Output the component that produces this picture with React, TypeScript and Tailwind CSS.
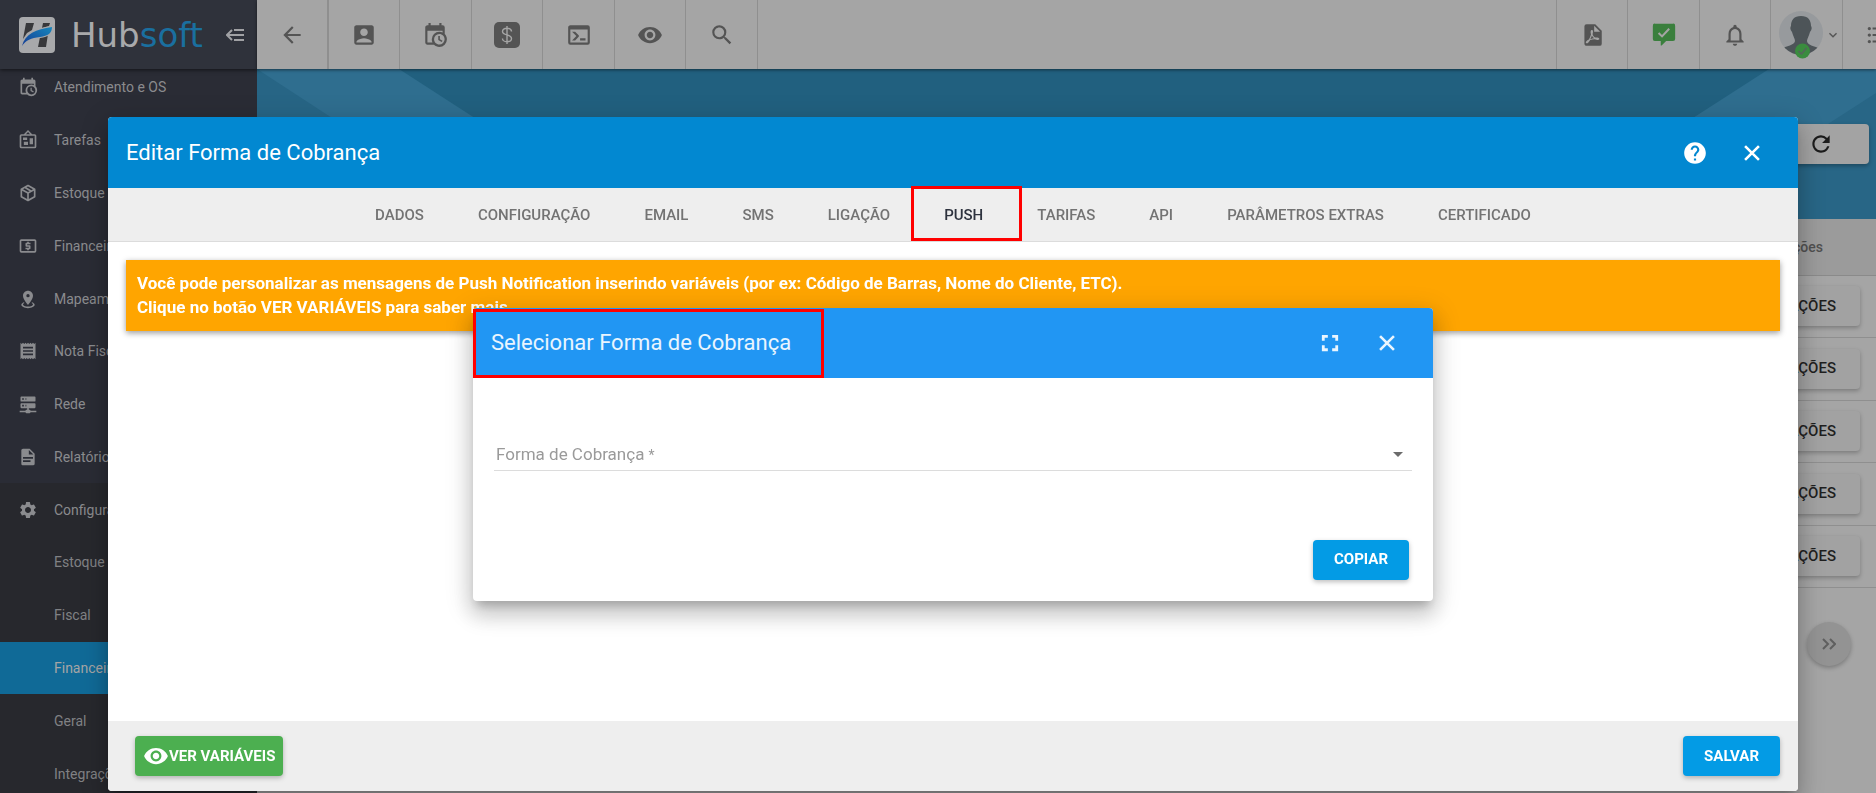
import type { ReactNode } from "react";
import {
  MdAccountBox,
  MdArrowBack,
  MdArrowDropDown,
  MdExpandMore,
  MdFormatListBulleted,
  MdHelp,
  MdNotificationsNone,
  MdReceipt,
  MdRefresh,
  MdSearch,
  MdSettings,
  MdVisibility,
} from "react-icons/md";

const paths = {
  calendarClock:
    "M15,13H16.5V15.82L18.94,17.23L18.19,18.53L15,16.69V13M19,8H5V19H9.67C9.24,18.09 9,17.07 9,16A7,7 0 0,1 16,9C17.07,9 18.09,9.24 19,9.67V8M5,21C3.89,21 3,20.1 3,19V5C3,3.89 3.89,3 5,3H6V1H8V3H16V1H18V3H19A2,2 0 0,1 21,5V11.1C22.24,12.36 23,14.09 23,16A7,7 0 0,1 16,23C14.09,23 12.36,22.24 11.1,21H5M16,11.15A4.85,4.85 0 0,0 11.15,16C11.15,18.68 13.32,20.85 16,20.85A4.85,4.85 0 0,0 20.85,16C20.85,13.32 18.68,11.15 16,11.15Z",
  board:
    "M12.04,2.5L9.53,5H14.53L12.04,2.5M4,7V20H20V7H4M12,0L17,5V5H20A2,2 0 0,1 22,7V20A2,2 0 0,1 20,22H4A2,2 0 0,1 2,20V7A2,2 0 0,1 4,5H7V5L12,0M7,18V14H12V18H7M14,17V10H18V17H14M6,12V9H11V12H6Z",
  box: "M21,16.5C21,16.88 20.79,17.21 20.47,17.38L12.57,21.82C12.41,21.94 12.21,22 12,22C11.79,22 11.59,21.94 11.43,21.82L3.53,17.38C3.21,17.21 3,16.88 3,16.5V7.5C3,7.12 3.21,6.79 3.53,6.62L11.43,2.18C11.59,2.06 11.79,2 12,2C12.21,2 12.41,2.06 12.57,2.18L20.47,6.62C20.79,6.79 21,7.12 21,7.5V16.5M12,4.15L10.11,5.22L16,8.61L17.96,7.5L12,4.15M6.04,7.5L12,10.85L13.96,9.75L8.08,6.35L6.04,7.5M5,15.91L11,19.29V12.58L5,9.21V15.91M19,15.91V9.21L13,12.58V19.29L19,15.91Z",
  cash: "M20,18H4V6H20M20,4H4C2.89,4 2,4.89 2,6V18A2,2 0 0,0 4,20H20A2,2 0 0,0 22,18V6C22,4.89 21.1,4 20,4M11,17H13V16H14A1,1 0 0,0 15,15V12A1,1 0 0,0 14,11H11V10H15V8H13V7H11V8H10A1,1 0 0,0 9,9V12A1,1 0 0,0 10,13H13V14H9V16H11V17Z",
  marker:
    "M12,2C15.31,2 18,4.66 18,7.95C18,12.41 12,19 12,19C12,19 6,12.41 6,7.95C6,4.66 8.69,2 12,2M12,6A2,2 0 0,0 10,8A2,2 0 0,0 12,10A2,2 0 0,0 14,8A2,2 0 0,0 12,6M20,19C20,21.21 16.42,23 12,23C7.58,23 4,21.21 4,19C4,17.71 5.22,16.56 7.11,15.83L7.75,16.74C6.67,17.19 6,17.81 6,18.5C6,19.88 8.69,21 12,21C15.31,21 18,19.88 18,18.5C18,17.81 17.33,17.19 16.25,16.74L16.89,15.83C18.78,16.56 20,17.71 20,19Z",
  server:
    "M13,19H14A1,1 0 0,1 15,20H22V22H15A1,1 0 0,1 14,23H10A1,1 0 0,1 9,22H2V20H9A1,1 0 0,1 10,19H11V17H4A1,1 0 0,1 3,16V12A1,1 0 0,1 4,11H20A1,1 0 0,1 21,12V16A1,1 0 0,1 20,17H13V19M4,3H20A1,1 0 0,1 21,4V8A1,1 0 0,1 20,9H4A1,1 0 0,1 3,8V4A1,1 0 0,1 4,3M9,7H10V5H9V7M9,15H10V13H9V15M5,5V7H7V5H5M5,13V15H7V13H5Z",
  document:
    "M13,9H18.5L13,3.5V9M6,2H14L20,8V20A2,2 0 0,1 18,22H6C4.89,22 4,21.1 4,20V4C4,2.89 4.89,2 6,2M15,18V16H6V18H15M18,14V12H6V14H18Z",
  console:
    "M20,19V7H4V19H20M20,3A2,2 0 0,1 22,5V19A2,2 0 0,1 20,21H4A2,2 0 0,1 2,19V5C2,3.89 2.9,3 4,3H20M13,17V15H18V17H13M9.58,13L5.57,9H8.4L11.7,12.3C12.09,12.69 12.09,13.33 11.7,13.72L8.42,17H5.59L9.58,13Z",
  pdf: "M14,9H19.5L14,3.5V9M7,2H15L21,8V20A2,2 0 0,1 19,22H7C5.89,22 5,21.1 5,20V4A2,2 0 0,1 7,2M11.93,12.44C12.34,13.34 12.86,14.08 13.46,14.59L13.87,14.91C13,15.07 11.8,15.35 10.53,15.84V15.84L10.42,15.88L10.92,14.84C11.37,13.97 11.7,13.18 11.93,12.44M18.41,16.25C18.59,16.07 18.68,15.84 18.69,15.59C18.72,15.39 18.67,15.2 18.57,15.04C18.28,14.57 17.53,14.35 16.29,14.35L15,14.42L14.13,13.84C13.5,13.32 12.93,12.41 12.53,11.28L12.57,11.14C12.9,9.81 13.21,8.2 12.55,7.54C12.39,7.38 12.17,7.3 11.94,7.3H11.7C11.33,7.3 11,7.69 10.91,8.07C10.54,9.4 10.76,10.13 11.13,11.34V11.35C10.88,12.23 10.56,13.25 10.05,14.28L9.09,16.08L8.2,16.57C7,17.32 6.43,18.16 6.32,18.69C6.28,18.88 6.3,19.05 6.37,19.23L6.4,19.28L6.88,19.59L7.32,19.7C8.13,19.7 9.05,18.75 10.29,16.63L10.47,16.56C11.5,16.23 12.78,16 14.5,15.81C15.53,16.32 16.74,16.55 17.5,16.55C17.94,16.55 18.24,16.44 18.41,16.25Z",
  commentCheck:
    "M4,1.5H20A2,2 0 0,1 22.3,3.6V15.4A2,2 0 0,1 20.3,17.5H14L9.8,21.8H9V17.5H3.9A2,2 0 0,1 1.7,15.4V3.6A2,2 0 0,1 4,1.5Z",
};

function Icon({ d, className }: { d: string; className: string }) {
  return (
    <svg viewBox="0 0 24 24" fill="currentColor" fillRule="evenodd" aria-hidden="true" className={className}>
      <path d={d} />
    </svg>
  );
}

function CloseIcon() {
  return (
    <svg viewBox="0 0 24 24" fill="none" stroke="currentColor" strokeWidth="2.4" aria-hidden="true" className="size-[26px]">
      <path d="M5.600 5.600l12.800 12.800M18.400 5.600L5.600 18.400" />
    </svg>
  );
}

function FullscreenIcon() {
  return (
    <svg viewBox="0 0 24 24" fill="none" stroke="currentColor" strokeWidth="2.6" aria-hidden="true" className="size-[26px]">
      <path d="M5.800 10V5.800H10M14 5.800h4.200V10M18.200 14v4.200H14M10 18.200H5.800V14" />
    </svg>
  );
}

type MenuItem = { label: string; icon?: ReactNode; tone: string };

const mainItem = "text-[#8a8b8e]";
const subItem = "bg-[#27282d] text-[#808184]";

const menu: MenuItem[] = [
  { label: "Atendimento e OS", icon: <Icon d={paths.calendarClock} className="size-5" />, tone: mainItem },
  { label: "Tarefas", icon: <Icon d={paths.board} className="size-5" />, tone: mainItem },
  { label: "Estoque", icon: <Icon d={paths.box} className="size-5" />, tone: mainItem },
  { label: "Financeiro", icon: <Icon d={paths.cash} className="size-5" />, tone: mainItem },
  { label: "Mapeamento", icon: <Icon d={paths.marker} className="size-5" />, tone: mainItem },
  { label: "Nota Fiscal", icon: <MdReceipt className="size-5" />, tone: mainItem },
  { label: "Rede", icon: <Icon d={paths.server} className="size-5" />, tone: mainItem },
  { label: "Relatórios", icon: <Icon d={paths.document} className="size-5" />, tone: mainItem },
  { label: "Configurações", icon: <MdSettings className="size-5" />, tone: "bg-[#27282d] text-[#8a8b8e]" },
  { label: "Estoque", tone: subItem },
  { label: "Fiscal", tone: subItem },
  { label: "Financeiro", tone: "bg-[#106a97] text-[#a5a5a5]" },
  { label: "Geral", tone: subItem },
  { label: "Integrações", tone: subItem },
];

function Brand() {
  return (
    <div className="z-10 flex h-[69px] shrink-0 items-center bg-[#2f323b] pl-[19px] shadow-[0_1px_4px_rgba(0,0,0,0.6)]">
      <svg viewBox="0 0 36 36" className="size-9 shrink-0" aria-hidden="true">
        <defs>
          <linearGradient id="swoosh" x1="0" y1="1" x2="1" y2="0">
            <stop offset="0" stopColor="#153c94" />
            <stop offset="1" stopColor="#1787bd" />
          </linearGradient>
        </defs>
        <rect width="36" height="36" rx="4" fill="#a8a9ab" />
        <path d="M7 6h8l-2 7-5 3-4 6zM24 6h7l-1 3-7 2zM21 20l8-3-2 13h-8z" fill="#37383b" />
        <path d="M3 29C6 17 17 12 33 10c0 6-4 9-12 10-9 1-14 3-18 9z" fill="#a8a9ab" stroke="#a8a9ab" strokeWidth="2" />
        <path d="M3 29C6 17 17 12 33 10c0 6-4 9-12 10-9 1-14 3-18 9z" fill="url(#swoosh)" />
      </svg>
      <p className="ml-4 font-['DejaVu_Sans',sans-serif] text-[34px] leading-9 text-[#a8a9ab]">
        Hub<span className="text-[#1a6f9f]">soft</span>
      </p>
      <button type="button" aria-label="Recolher menu" className="ml-auto mr-[13px]">
        <svg viewBox="0 0 18 12" className="h-3 w-[18px]" fill="none" stroke="#a0a1a4" strokeWidth="2" aria-hidden="true">
          <path d="M1 6h17M8 1h10M8 11h10M6 1 1 6l5 5" />
        </svg>
      </button>
    </div>
  );
}

function Sidebar() {
  return (
    <aside className="flex w-[257px] shrink-0 flex-col bg-[#2a2c35]">
      <Brand />
      <nav className="min-h-0 flex-1 overflow-hidden" aria-label="Principal">
        <ul className="-mt-2 grid h-[calc(100%+15px)] auto-rows-fr">
          {menu.map((item, i) => (
            <li key={i} className={item.tone}>
              <a href="#" className="flex h-full items-center pl-[18px] text-sm">
                <span className="w-9 shrink-0">{item.icon}</span>
                {item.label}
              </a>
            </li>
          ))}
        </ul>
      </nav>
    </aside>
  );
}

const toolCell = "flex items-center justify-center border-r border-[#8f8f8f]";

function Toolbar() {
  return (
    <header className="z-10 flex h-[69px] shrink-0 justify-between overflow-hidden bg-[#a5a5a5] text-[#545454] shadow-[0_1px_3px_rgba(0,0,0,0.5)]">
      <div className="grid w-[501px] grid-cols-7">
        <button type="button" aria-label="Voltar" className="flex items-center justify-center border-r-2 border-[#8f8f8f]">
          <MdArrowBack className="size-[26px]" />
        </button>
        <button type="button" aria-label="Clientes" className={toolCell}>
          <MdAccountBox className="size-[26px]" />
        </button>
        <button type="button" aria-label="Agenda" className={toolCell}>
          <Icon d={paths.calendarClock} className="size-[26px]" />
        </button>
        <button type="button" aria-label="Financeiro" className={toolCell}>
          <svg viewBox="0 0 26 26" className="size-[26px]" fill="none" aria-hidden="true">
            <rect width="26" height="26" rx="5" fill="currentColor" />
            <path
              d="M13 4v18M17.5 9.5C17.5 7.500 15.600 6.300 13 6.300s-4.500 1.200-4.500 3.200c0 4.500 9 2.300 9 6.900 0 2-1.900 3.300-4.500 3.300s-4.500-1.300-4.500-3.300"
              stroke="#a5a5a5"
              strokeWidth="1.400"
            />
          </svg>
        </button>
        <button type="button" aria-label="Console" className={toolCell}>
          <Icon d={paths.console} className="size-[26px]" />
        </button>
        <button type="button" aria-label="Visualizar" className={toolCell}>
          <MdVisibility className="size-[26px]" />
        </button>
        <button type="button" aria-label="Pesquisar" className={toolCell}>
          <MdSearch className="size-[26px]" />
        </button>
      </div>
      <div className="-mr-[38px] grid w-[358px] shrink-0 grid-cols-5 border-l border-[#8f8f8f]">
        <button type="button" aria-label="Relatório PDF" className={toolCell}>
          <Icon d={paths.pdf} className="size-[26px]" />
        </button>
        <button type="button" aria-label="Mensagens" className={toolCell}>
          <svg viewBox="0 0 24 24" className="size-[26px]" aria-hidden="true">
            <path d={paths.commentCheck} fill="#3a7f3d" />
            <path d="M7 10.200l3.200 3.100 6.600-7" fill="none" stroke="#a5a5a5" strokeWidth="1.900" />
          </svg>
        </button>
        <button type="button" aria-label="Notificações" className={toolCell}>
          <MdNotificationsNone className="size-[26px]" />
        </button>
        <button type="button" aria-label="Minha conta" className="flex items-center justify-end border-r border-[#8f8f8f] pr-px">
          <svg viewBox="0 0 44 48" className="mr-0.5 h-12 w-11 shrink-0" aria-hidden="true">
            <defs>
              <clipPath id="avatar">
                <circle cx="22" cy="22" r="22" />
              </clipPath>
            </defs>
            <g clipPath="url(#avatar)">
              <rect width="44" height="44" fill="#979a9d" />
              <path
                d="M22 5c7 0 10 4 10 10 1 1 1 4-1 6-1 4-3 7-3 9 0 4 7 5 14 8l2 6H0l2-6c5-3 14-4 14-8 0-2-2-5-3-9-2-2-2-5-1-6 0-6 3-10 10-10z"
                fill="#4d5458"
              />
            </g>
            <circle cx="23.500" cy="40" r="7.500" fill="#3a8c3e" />
            <path d="M19.500 40l3 3 5-6" fill="none" stroke="#55645a" strokeWidth="1.500" />
          </svg>
          <MdExpandMore className="size-4 shrink-0" />
        </button>
        <button type="button" aria-label="Atalhos" className={toolCell}>
          <MdFormatListBulleted className="size-[26px]" />
        </button>
      </div>
    </header>
  );
}

function Content() {
  return (
    <main className="flex min-h-0 flex-1 flex-col bg-[#a5a5a5]">
      <div className="relative flex h-[150px] shrink-0 items-start justify-end bg-[#21607f] pr-[7px] pt-[55px]">
        <svg className="absolute left-0 top-0 h-[150px] w-[374px]" viewBox="0 0 374 150" aria-hidden="true">
          <path d="M0 0h142l232 150H0z" fill="#2f6e8f" />
          <path d="M0 0l230 150H0z" fill="#276585" />
        </svg>
        <svg className="absolute right-0 top-0 h-[150px] w-[340px]" viewBox="0 0 340 150" aria-hidden="true">
          <path d="M233 0h107v150H0z" fill="#2f6e8f" />
          <path d="M340 24v126H145z" fill="#286686" />
        </svg>
        <button
          type="button"
          aria-label="Atualizar"
          className="relative flex h-10 w-24 items-center justify-center rounded bg-[#a3a3a3] text-[#1c1c1c] shadow-[0_2px_4px_rgba(0,0,0,0.3)]"
        >
          <MdRefresh className="size-[26px]" />
        </button>
      </div>
      <table className="h-[369px] w-full shrink-0 text-sm">
        <thead>
          <tr className="h-14 border-b border-[#8a8a8a] bg-[#9b9b9b]">
            <th className="pr-[53px] text-right font-medium text-[#505050]">Ações</th>
          </tr>
        </thead>
        <tbody>
          {[1, 2, 3, 4, 5].map((row) => (
            <tr key={row} className="border-b border-[#8f8f8f]">
              <td className="pr-4 text-right">
                <button
                  type="button"
                  className="h-10 rounded bg-[#a2a2a2] px-6 text-[15px] font-medium text-[#1f1f1f] shadow-[0_2px_4px_rgba(0,0,0,0.25)]"
                >
                  AÇÕES
                </button>
              </td>
            </tr>
          ))}
        </tbody>
      </table>
      <div className="flex justify-end pr-[25px] pt-[34px]">
        <button
          type="button"
          aria-label="Expandir painel"
          className="flex size-11 items-center justify-center rounded-full bg-[#939393] text-[#5f5f5f] shadow-[0_2px_4px_rgba(0,0,0,0.25)]"
        >
          <svg viewBox="0 0 14 12" className="h-3 w-3.5" fill="none" stroke="currentColor" strokeWidth="2" aria-hidden="true">
            <path d="M1 1l5 5-5 5M8 1l5 5-5 5" />
          </svg>
        </button>
      </div>
    </main>
  );
}

const tabs = [
  "DADOS",
  "CONFIGURAÇÃO",
  "EMAIL",
  "SMS",
  "LIGAÇÃO",
  "PUSH",
  "TARIFAS",
  "API",
  "PARÂMETROS EXTRAS",
  "CERTIFICADO",
];

const overlay = "fixed inset-0 flex pb-0.5 pl-[108px] pr-[78px] pt-[117px]";
const dialogShadow =
  "shadow-[0_8px_9px_-4px_rgba(0,0,0,0.2),0_14px_21px_2px_rgba(0,0,0,0.14),0_6px_26px_5px_rgba(0,0,0,0.12)]";
const primaryButton =
  "h-10 rounded bg-[#039be5] px-[21px] text-[15px] font-bold text-white shadow-[0_2px_5px_rgba(0,0,0,0.26)]";
const iconButton = "flex size-11 items-center justify-center";

function EditDialog() {
  return (
    <div className={`${overlay} z-20`}>
      <section
        role="dialog"
        aria-labelledby="edit-title"
        className={`flex min-w-0 flex-1 flex-col overflow-hidden rounded bg-white ${dialogShadow}`}
      >
        <header className="flex h-[71px] shrink-0 items-center bg-[#0288d1] pl-[18px] pr-6 text-white">
          <h1 id="edit-title" className="flex-1 text-[22px]">
            Editar Forma de Cobrança
          </h1>
          <div className="flex gap-[13px]">
            <button type="button" aria-label="Ajuda" className={iconButton}>
              <MdHelp className="size-[26px]" />
            </button>
            <button type="button" aria-label="Fechar edição" className={iconButton}>
              <CloseIcon />
            </button>
          </div>
        </header>
        <div role="tablist" className="flex h-[54px] shrink-0 justify-center border-b border-[#dcdcdc] bg-[#eeeeee]">
          {tabs.map((tab) => {
            const active = tab === "PUSH";
            return (
              <button
                key={tab}
                type="button"
                role="tab"
                aria-selected={active}
                className={`relative px-[27px] pt-0.5 text-[15px] font-medium ${active ? "text-[#2d323e]" : "text-[#737373]"}`}
              >
                {tab}
                {active && <span className="absolute -left-1.5 -right-3 -top-0.5 bottom-0 z-10 border-3 border-[#ff0000]" />}
              </button>
            );
          })}
        </div>
        <div className="min-h-0 flex-1 p-[18px]">
          <p className="bg-[#ffa500] px-[11px] py-[11px] pb-3 text-[17px] font-bold leading-6 text-white shadow-[0_2px_6px_rgba(0,0,0,0.4)]">
            Você pode personalizar as mensagens de Push Notification inserindo variáveis (por ex: Código de Barras, Nome do
            Cliente, ETC).
            <br />
            Clique no botão VER VARIÁVEIS para saber mais.
          </p>
        </div>
        <footer className="flex h-[70px] shrink-0 items-center justify-between bg-[#eeeeee] pl-[27px] pr-[18px]">
          <button
            type="button"
            className="flex h-10 items-center rounded bg-[#4caf50] px-2 text-[15px] font-bold text-white shadow-[0_2px_5px_rgba(0,0,0,0.26)]"
          >
            <MdVisibility className="size-[26px]" />
            VER VARIÁVEIS
          </button>
          <button type="button" className={primaryButton}>
            SALVAR
          </button>
        </footer>
      </section>
    </div>
  );
}

function SelectDialog() {
  return (
    <div className={`${overlay} z-30 items-center justify-center`}>
      <section
        role="dialog"
        aria-labelledby="select-title"
        className={`flex w-full max-w-[960px] flex-col rounded bg-white ${dialogShadow}`}
      >
        <header className="relative flex h-[70px] shrink-0 items-center rounded-t bg-[#2196f3] pl-[18px] pr-6 text-white/90">
          <h2 id="select-title" className="flex-1 text-[22px]">
            Selecionar Forma de Cobrança
          </h2>
          <div className="flex gap-[13px]">
            <button type="button" aria-label="Tela cheia" className={iconButton}>
              <FullscreenIcon />
            </button>
            <button type="button" aria-label="Fechar seleção" className={iconButton}>
              <CloseIcon />
            </button>
          </div>
          <span className="absolute bottom-0 left-0 top-px w-[351px] border-3 border-[#ff0000]" />
        </header>
        <div className="px-[21px] pt-[60px]">
          <div className="grid border-b border-[#dcdcdc] text-[17px] text-[#9a9a9a]">
            <label htmlFor="billing" className="pointer-events-none col-start-1 row-start-1 self-center pl-0.5 pt-0.5">
              Forma de Cobrança <span className="text-sm">*</span>
            </label>
            <select id="billing" className="col-start-1 row-start-1 h-8 w-full appearance-none bg-transparent outline-none" />
            <MdArrowDropDown className="pointer-events-none col-start-1 row-start-1 mr-0.5 size-6 self-center justify-self-end text-[#6b6b6b]" />
          </div>
        </div>
        <div className="flex justify-end px-6 pb-[21px] pt-[69px]">
          <button type="button" className={primaryButton}>
            COPIAR
          </button>
        </div>
      </section>
    </div>
  );
}

export default function App() {
  return (
    <div className="flex h-screen overflow-hidden bg-[#a5a5a5] font-[Roboto,sans-serif]">
      <Sidebar />
      <div className="flex min-w-0 flex-1 flex-col">
        <Toolbar />
        <Content />
      </div>
      <EditDialog />
      <SelectDialog />
    </div>
  );
}
